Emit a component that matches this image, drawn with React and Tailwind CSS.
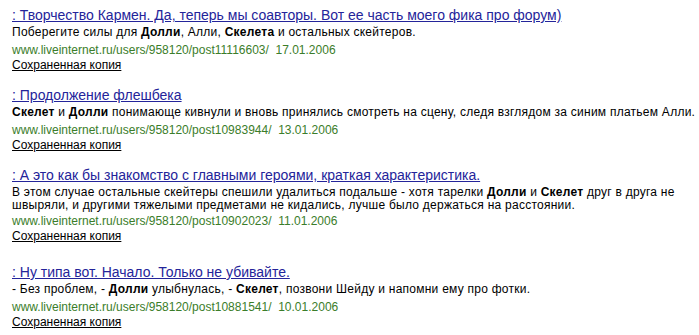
import React from 'react';

const results = [
  {
    title: ': Творчество Кармен. Да, теперь мы соавторы. Вот ее часть моего фика про форум)',
    snippet: [
      ['Поберегите силы для '], ['Долли', 1], [', Алли, '], ['Скелета', 1], [' и остальных скейтеров.'],
    ],
    url: 'www.liveinternet.ru/users/958120/post11116603/',
    date: '17.01.2006',
    mt: 'mt-[7px]',
    urlMt: 'mt-[3px]',
  },
  {
    title: ': Продолжение флешбека',
    snippet: [
      ['Скелет', 1], [' и '], ['Долли', 1], [' понимающе кивнули и вновь принялись смотреть на сцену, следя взглядом за синим платьем Алли.'],
    ],
    url: 'www.liveinternet.ru/users/958120/post10983944/',
    date: '13.01.2006',
    mt: 'mt-[14px]',
    urlMt: 'mt-[3px]',
  },
  {
    title: ': А это как бы знакомство с главными героями, краткая характеристика.',
    snippet: [
      ['В этом случае остальные скейтеры спешили удалиться подальше - хотя тарелки '], ['Долли', 1], [' и '], ['Скелет', 1],
      [' друг в друга не швыряли, и другими тяжелыми предметами не кидались, лучше было держаться на расстоянии.'],
    ],
    url: 'www.liveinternet.ru/users/958120/post10902023/',
    date: '11.01.2006',
    mt: 'mt-[14px]',
    urlMt: 'mt-[1px]',
  },
  {
    title: ': Ну типа вот. Начало. Только не убивайте.',
    snippet: [
      ['- Без проблем, - '], ['Долли', 1], [' улыбнулась, - '], ['Скелет', 1], [', позвони Шейду и напомни ему про фотки.'],
    ],
    url: 'www.liveinternet.ru/users/958120/post10881541/',
    date: '10.01.2006',
    mt: 'mt-[20px]',
    urlMt: 'mt-[3px]',
  },
];

export default function App() {
  return (
    <div className="w-[699px] h-[335px] bg-white overflow-hidden pl-[12px] text-black" style={{ fontFamily: '"Liberation Sans", Arial, sans-serif' }}>
      {results.map((r, i) => (
        <div key={i} className={`${r.mt} flex flex-col`}>
          <a className="text-[14px] leading-[17px] text-[#24249a] underline underline-offset-[1px] w-fit">{r.title}</a>
          <p className="text-[12px] leading-[13px] tracking-[0.25px] mt-[2px] w-[684px]">
            {r.snippet.map(([t, b], j) => b ? <b key={j}>{t}</b> : <span key={j}>{t}</span>)}
          </p>
          <div className={`text-[12px] leading-[16px] ${r.urlMt} text-[#3b7d2a]`}>
            {r.url}&nbsp;&nbsp;{r.date}
          </div>
          <a className="text-[12px] leading-[15px] underline underline-offset-[1px] w-fit">Сохраненная копия</a>
        </div>
      ))}
    </div>
  );
}
